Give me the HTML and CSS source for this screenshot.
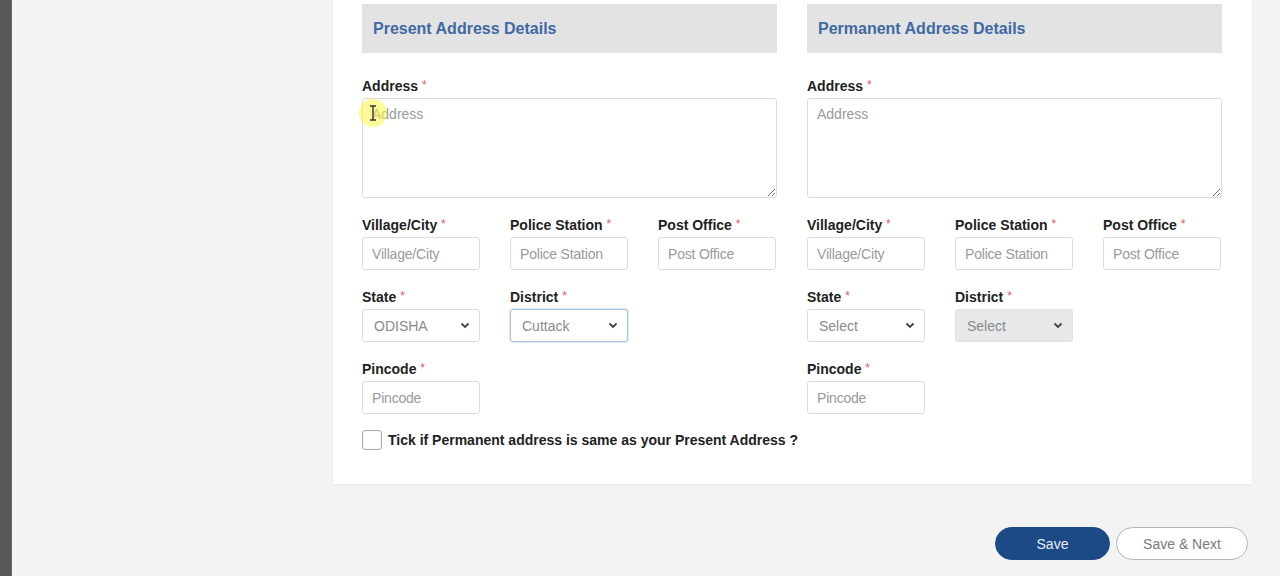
FILE: index.html
```html
<!DOCTYPE html>
<html lang="en">
<head>
<meta charset="utf-8">
<title>Address Details</title>
<link rel="stylesheet" href="styles.css">
</head>
<body>
<div class="page">
  <div class="strip"></div>
  <main class="main">
    <section class="card">
      <div class="columns">
        <div class="col">
          <div class="sec-head">Present Address Details</div>
          <div class="field">
            <label class="lbl">Address <span class="req">*</span></label>
            <div class="ta-wrap">
              <textarea class="ta" placeholder="Address"></textarea>
              <span class="cursor-hl"><svg width="8" height="16" viewBox="0 0 8 16"><path d="M1 1h6M4 1v14M1 15h6" stroke="#333" stroke-width="1.4" fill="none"/></svg></span>
            </div>
          </div>
          <div class="row3">
            <div class="field"><label class="lbl">Village/City <span class="req">*</span></label><input class="inp" placeholder="Village/City"></div>
            <div class="field"><label class="lbl">Police Station <span class="req">*</span></label><input class="inp" placeholder="Police Station"></div>
            <div class="field"><label class="lbl">Post Office <span class="req">*</span></label><input class="inp" placeholder="Post Office"></div>
          </div>
          <div class="row3">
            <div class="field"><label class="lbl">State <span class="req">*</span></label>
              <div class="sel-wrap"><select class="sel"><option>ODISHA</option></select><svg class="chev" width="10" height="7" viewBox="0 0 10 7"><path d="M1.5 1.5L5 5l3.5-3.5" stroke="#444" stroke-width="1.8" fill="none"/></svg></div>
            </div>
            <div class="field"><label class="lbl">District <span class="req">*</span></label>
              <div class="sel-wrap"><select class="sel focus"><option>Cuttack</option></select><svg class="chev" width="10" height="7" viewBox="0 0 10 7"><path d="M1.5 1.5L5 5l3.5-3.5" stroke="#444" stroke-width="1.8" fill="none"/></svg></div>
            </div>
          </div>
          <div class="row3">
            <div class="field"><label class="lbl">Pincode <span class="req">*</span></label><input class="inp" placeholder="Pincode"></div>
          </div>
          <label class="check"><span class="box"></span><span class="check-txt">Tick if Permanent address is same as your Present Address ?</span></label>
        </div>
        <div class="col">
          <div class="sec-head">Permanent Address Details</div>
          <div class="field">
            <label class="lbl">Address <span class="req">*</span></label>
            <div class="ta-wrap"><textarea class="ta" placeholder="Address"></textarea></div>
          </div>
          <div class="row3">
            <div class="field"><label class="lbl">Village/City <span class="req">*</span></label><input class="inp" placeholder="Village/City"></div>
            <div class="field"><label class="lbl">Police Station <span class="req">*</span></label><input class="inp" placeholder="Police Station"></div>
            <div class="field"><label class="lbl">Post Office <span class="req">*</span></label><input class="inp" placeholder="Post Office"></div>
          </div>
          <div class="row3">
            <div class="field"><label class="lbl">State <span class="req">*</span></label>
              <div class="sel-wrap"><select class="sel"><option>Select</option></select><svg class="chev" width="10" height="7" viewBox="0 0 10 7"><path d="M1.5 1.5L5 5l3.5-3.5" stroke="#444" stroke-width="1.8" fill="none"/></svg></div>
            </div>
            <div class="field"><label class="lbl">District <span class="req">*</span></label>
              <div class="sel-wrap"><select class="sel disabled" disabled><option>Select</option></select><svg class="chev" width="10" height="7" viewBox="0 0 10 7"><path d="M1.5 1.5L5 5l3.5-3.5" stroke="#444" stroke-width="1.8" fill="none"/></svg></div>
            </div>
          </div>
          <div class="row3">
            <div class="field"><label class="lbl">Pincode <span class="req">*</span></label><input class="inp" placeholder="Pincode"></div>
          </div>
        </div>
      </div>
    </section>
    <div class="actions">
      <button class="btn btn-primary">Save</button>
      <button class="btn btn-outline">Save &amp; Next</button>
    </div>
  </main>
</div>
</body>
</html>
```

FILE: styles.css
```css
* { box-sizing: border-box; }
html, body { margin: 0; padding: 0; }
body {
  background: #f3f3f3;
  font-family: "Liberation Sans", Arial, sans-serif;
  color: #222;
  width: 1280px;
  height: 576px;
  overflow: hidden;
}
.page { display: flex; height: 576px; }
.strip {
  width: 12px;
  flex: none;
  background: #575757;
  border-right: 1px solid #6a6a6a;
}
.main {
  flex: 1;
  padding-left: 321px;
  padding-right: 28px;
}
.card {
  background: #fff;
  width: 919px;
  height: 484px;
  padding: 4px 30px 0 29px;
  box-shadow: 0 1px 2px rgba(0,0,0,0.04);
}
.columns { display: flex; gap: 30px; }
.col { width: 415px; display: flex; flex-direction: column; }
.sec-head {
  height: 49px;
  background: #e3e3e3;
  color: #4069a3;
  font-weight: bold;
  font-size: 16px;
  display: flex;
  align-items: center;
  padding-left: 11px;
  margin-bottom: 25px;
}
.field { display: flex; flex-direction: column; margin-bottom: 19px; }
.lbl {
  display: block;
  height: 17px;
  font-size: 14px;
  font-weight: bold;
  line-height: 17px;
  margin-bottom: 3px;
  color: #222;
  white-space: nowrap;
}
.req { color: #e05a5a; font-weight: normal; font-size: 12px; line-height: 1; vertical-align: top; position: relative; top: 1px; }
.ta-wrap { position: relative; height: 100px; }
.ta {
  display: block;
  width: 415px;
  height: 100px;
  border: 1px solid #dcdcdc;
  border-radius: 3px;
  padding: 7px 9px;
  font-family: "Liberation Sans", Arial, sans-serif;
  font-size: 14px;
  resize: vertical;
}
.ta::placeholder, .inp::placeholder { color: #9a9a9a; }
.cursor-hl {
  position: absolute;
  left: -3px;
  top: 1px;
  width: 28px;
  height: 28px;
  border-radius: 50%;
  background: rgba(250, 245, 70, 0.55);
  display: flex;
  align-items: center;
  justify-content: center;
  pointer-events: none;
}
.row3 { display: grid; grid-template-columns: 118px 118px 118px; column-gap: 30px; }
.row3 .field { margin-bottom: 19px; }
.inp {
  width: 118px;
  height: 33px;
  border: 1px solid #dcdcdc;
  border-radius: 3px;
  padding: 0 9px;
  font-family: "Liberation Sans", Arial, sans-serif;
  font-size: 14px;
  letter-spacing: -0.2px;
}
.sel-wrap { position: relative; width: 118px; height: 33px; }
.sel {
  -webkit-appearance: none;
  appearance: none;
  display: block;
  width: 118px;
  height: 33px;
  border: 1px solid #dcdcdc;
  border-radius: 3px;
  padding: 0 10px 0 11px;
  background: #fff;
  font-family: "Liberation Sans", Arial, sans-serif;
  font-size: 14px;
  color: #8a8a8a;
}
.sel.focus { border-color: #a7c4e4; box-shadow: 0 0 0 1px rgba(167,196,228,0.35); }
.sel.disabled { background: #e6e8ea; border-color: #e0e2e4; color: #8a8a8a; opacity: 1; }
.chev { position: absolute; right: 10px; top: 13px; pointer-events: none; }
.check {
  display: flex;
  align-items: center;
  gap: 6px;
  margin-top: -3px;
}
.box {
  flex: none;
  width: 20px;
  height: 20px;
  border: 1.5px solid #a8a8a8;
  border-radius: 3px;
  background: #fff;
}
.check-txt { font-size: 14px; font-weight: bold; color: #222; white-space: nowrap; }
.actions {
  display: flex;
  justify-content: flex-end;
  gap: 6px;
  margin-top: 43px;
  padding-right: 4px;
}
.btn {
  height: 33px;
  border-radius: 17px;
  font-family: "Liberation Sans", Arial, sans-serif;
  font-size: 14px;
  cursor: pointer;
}
.btn-primary {
  width: 115px;
  background: #1c4a86;
  color: #e8eef8;
  border: 1px solid #1c4a86;
}
.btn-outline {
  width: 132px;
  background: #fff;
  color: #7a7a7a;
  border: 1.5px solid #b5b5b5;
}
```
